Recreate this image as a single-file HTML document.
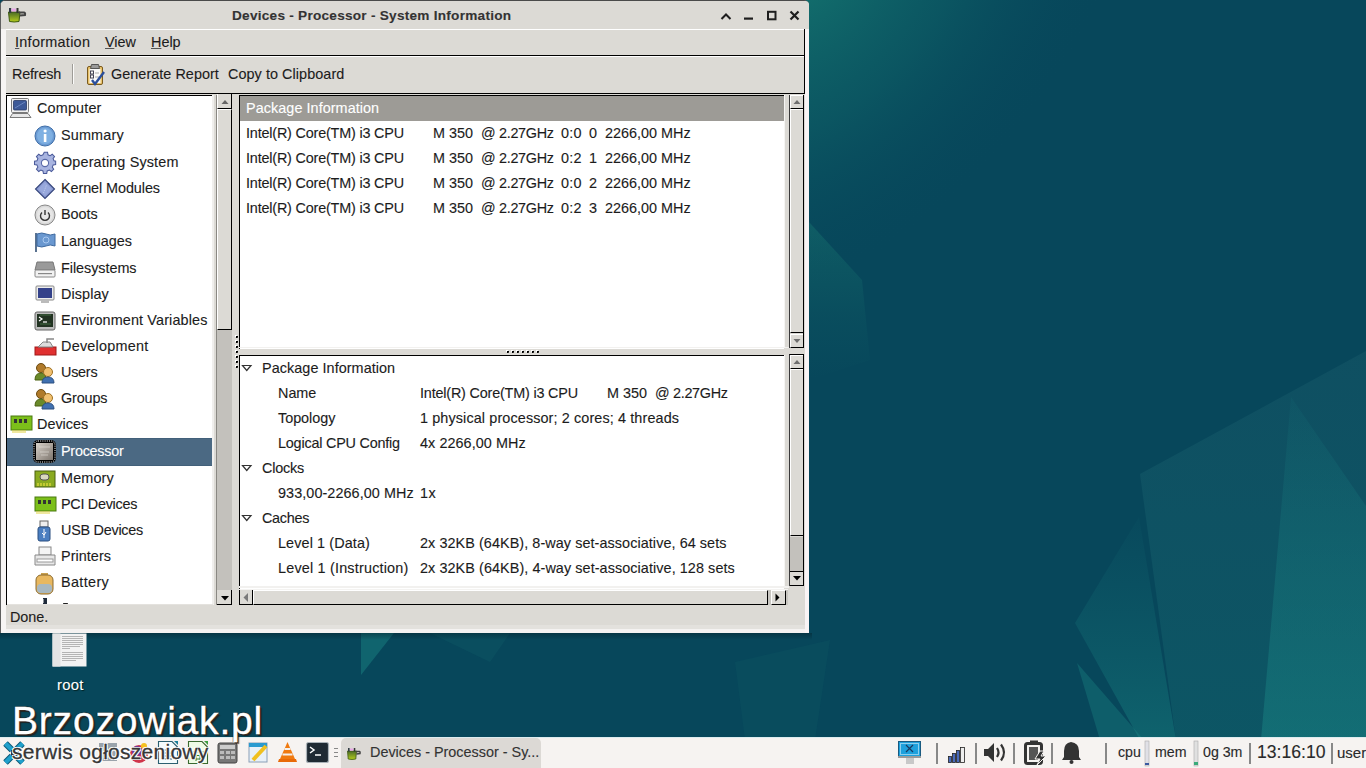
<!DOCTYPE html>
<html><head><meta charset="utf-8">
<style>
*{margin:0;padding:0;box-sizing:border-box}
html,body{width:1366px;height:768px;overflow:hidden}
body{position:relative;background:#07475b;font-family:"Liberation Sans",sans-serif;font-size:14.4px;color:#1c1c1c}
.a{position:absolute}
.t{position:absolute;white-space:nowrap;line-height:17px;height:17px;-webkit-text-stroke:0.12px currentColor}
svg{position:absolute;overflow:visible}
</style></head><body>
<svg style="left:0;top:0" width="1366" height="768" viewBox="0 0 1366 768">
<defs>
<radialGradient id="glow" cx="0.5" cy="0.5" r="0.5">
<stop offset="0" stop-color="#14746f" stop-opacity="0.95"/><stop offset="0.5" stop-color="#0f6468" stop-opacity="0.5"/><stop offset="1" stop-color="#07475b" stop-opacity="0"/></radialGradient>
<filter id="bl" x="-50%" y="-50%" width="200%" height="200%"><feGaussianBlur stdDeviation="35"/></filter>
<linearGradient id="pgw" x1="0" y1="0" x2="0" y2="1"><stop offset="0" stop-color="#1a7a72" stop-opacity="0.4"/><stop offset="0.6" stop-color="#1a7a72" stop-opacity="0.12"/><stop offset="1" stop-color="#1a7a72" stop-opacity="0"/></linearGradient>
<linearGradient id="pg1" x1="0" y1="0" x2="0" y2="1"><stop offset="0" stop-color="#3a8088" stop-opacity="0.15"/><stop offset="1" stop-color="#1f8a86" stop-opacity="0.22"/></linearGradient>
<linearGradient id="pg2" x1="0" y1="0" x2="0" y2="1"><stop offset="0" stop-color="#1b8a88" stop-opacity="0.08"/><stop offset="0.5" stop-color="#1b8a88" stop-opacity="0.28"/><stop offset="1" stop-color="#1b8a88" stop-opacity="0.45"/></linearGradient>
</defs>
<rect width="1366" height="768" fill="#07475b"/>
<ellipse cx="0" cy="0" rx="270" ry="400" fill="url(#glow)" transform="translate(805 -30) rotate(42)"/>
<polygon points="809,222 862,280 870,360 809,380" fill="url(#pgw)"/>
<polygon points="1140,474 1366,351 1366,740 1176,740" fill="url(#pg1)"/>
<polygon points="1291,397 1366,506 1366,740 1261,740" fill="url(#pg2)"/>
<linearGradient id="pg3" x1="0" y1="0" x2="0" y2="1"><stop offset="0" stop-color="#1a7c7f" stop-opacity="0.05"/><stop offset="1" stop-color="#1a8c88" stop-opacity="0.4"/></linearGradient><polygon points="1075,623 1139,517 1176,740 1140,740" fill="url(#pg3)"/>
<polygon points="1077,663 1144,740 1100,740" fill="#1d8a88" opacity="0.35"/>
<polygon points="361,633 394,633 361,675" fill="#1a8282" opacity="0.5"/>
<polygon points="430,633 510,633 490,662" fill="#176d74" opacity="0.2"/>
<polygon points="735,662 830,640 815,740 745,740" fill="#1a7070" opacity="0.12"/>
<linearGradient id="shd" x1="0" y1="0" x2="0" y2="1"><stop offset="0" stop-color="#021f28" stop-opacity="0.45"/><stop offset="1" stop-color="#021f28" stop-opacity="0"/></linearGradient>
<rect x="0" y="633" width="812" height="7" fill="url(#shd)"/>
</svg>
<div class="a" style="left:0px;top:0px;width:809px;height:633px;background:#f4f2f1;border-radius:5px 5px 0 0;border-left:1px solid #5f5f5f;border-top:1px solid #4a4a4a"></div>
<div class="a" style="left:1px;top:1px;width:808px;height:28px;background:#dcdad5;border-radius:4px 4px 0 0"></div>
<div class="t" style="left:232px;top:7px;font-weight:bold;font-size:13.6px;letter-spacing:0.26px;color:#333">Devices - Processor - System Information</div>
<svg style="left:4px;top:4px" width="26" height="22" viewBox="0 0 26 22">
<defs><linearGradient id="bkt" x1="0" y1="0" x2="0" y2="1"><stop offset="0" stop-color="#4a6a28"/><stop offset="1" stop-color="#b4cc1c"/></linearGradient></defs>
<path d="M4.5 8 H16 L15 17.5 Q10 18.5 5.5 17.5 Z" fill="url(#bkt)" stroke="#3e5a10" stroke-width="1"/>
<rect x="5" y="4" width="2.2" height="5" fill="#333c44"/>
<rect x="7.5" y="4.5" width="4.5" height="3" fill="#e8a8e8"/>
<rect x="12.5" y="4" width="2" height="5" fill="#333"/>
<path d="M15 8.5 H20 Q21.5 9 21 11 L16 11.5" fill="none" stroke="#444" stroke-width="2"/>
</svg>
<svg style="left:718px;top:8px" width="90" height="16" viewBox="0 0 90 16">
<path d="M3.5 11 L8 6.5 L12.5 11" fill="none" stroke="#1e1e1e" stroke-width="2"/>
<rect x="26" y="9.5" width="9" height="2.2" fill="#1e1e1e"/>
<rect x="50" y="3.8" width="7.5" height="7.5" fill="none" stroke="#1e1e1e" stroke-width="2"/>
<path d="M72.5 3.5 L80.5 11.5 M80.5 3.5 L72.5 11.5" stroke="#1e1e1e" stroke-width="2.2"/>
</svg>
<div class="a" style="left:6px;top:29px;width:799px;height:600px;background:#dcdad5;"></div>
<div class="a" style="left:1px;top:29px;width:5px;height:604px;background:#f7f5f4;"></div>
<div class="a" style="left:805px;top:29px;width:4px;height:604px;background:#f9f4f5;"></div>
<div class="a" style="left:6px;top:29px;width:799px;height:1px;background:#ffffff;"></div>
<div class="a" style="left:6px;top:55px;width:799px;height:1px;background:#000;"></div>
<div class="a" style="left:804px;top:29px;width:1px;height:27px;background:#000;"></div>
<div class="t" style="left:15px;top:34px;letter-spacing:0.292px;"><u style="text-decoration-thickness:1px;text-underline-offset:1px;text-decoration-color:#555">I</u>nformation</div>
<div class="t" style="left:105px;top:34px;letter-spacing:-0.026px;"><u style="text-decoration-thickness:1px;text-underline-offset:1px;text-decoration-color:#555">V</u>iew</div>
<div class="t" style="left:151px;top:34px;letter-spacing:0.005px;"><u style="text-decoration-thickness:1px;text-underline-offset:1px;text-decoration-color:#555">H</u>elp</div>
<div class="a" style="left:6px;top:56px;width:799px;height:1px;background:#ffffff;"></div>
<div class="a" style="left:6px;top:93px;width:799px;height:1px;background:#000;"></div>
<div class="a" style="left:804px;top:56px;width:1px;height:38px;background:#000;"></div>
<div class="t" style="left:12px;top:66px;letter-spacing:-0.190px;">Refresh</div>
<div class="a" style="left:72px;top:64px;width:1px;height:20px;background:#9e9c97;"></div>
<div class="a" style="left:73px;top:64px;width:1px;height:20px;background:#fbfbfa;"></div>
<svg style="left:86px;top:63px" width="20" height="24" viewBox="0 0 20 24">
<rect x="1.5" y="3.5" width="15" height="18" rx="1.5" fill="#e8c26a" stroke="#7a5a1e" stroke-width="1"/>
<rect x="3.5" y="6" width="11" height="14" fill="#fafafa"/>
<path d="M5.5 1.5 h7 l1 4 h-9 z" fill="#9a9a9a" stroke="#555" stroke-width="1"/>
<rect x="4.5" y="8" width="3" height="3" fill="none" stroke="#445" stroke-width="1"/>
<rect x="4.5" y="12" width="3" height="3" fill="none" stroke="#445" stroke-width="1"/>
<path d="M9 10 h4 M9 14 h4" stroke="#aaa" stroke-width="1"/>
<path d="M6 17 L9 21 L18 9" fill="none" stroke="#2b4f9c" stroke-width="2.4"/>
</svg>
<div class="t" style="left:111px;top:66px;letter-spacing:0.045px;">Generate Report</div>
<div class="t" style="left:228px;top:66px;letter-spacing:0.066px;">Copy to Clipboard</div>
<div class="a" style="left:6px;top:95px;width:208px;height:510px;background:#fff;border-left:1px solid #000;border-top:1px solid #000"></div>
<div class="a" style="left:212px;top:95px;width:2px;height:510px;background:#f0efed;"></div>
<div class="a" style="left:216px;top:95px;width:16px;height:510px;background:#c3c1bc;border-left:1px solid #8a8883"></div>
<div class="a" style="left:217px;top:94px;width:15px;height:15px;background:#dcdad5;border-right:1px solid #000;border-bottom:1px solid #000;border-left:1px solid #fff"></div>
<svg style="left:219px;top:98px" width="11" height="8"><path d="M2.5 6 L6 2 L9.5 6 Z" fill="#666"/></svg>
<div class="a" style="left:217px;top:109px;width:15px;height:221px;background:#dcdad5;border-right:1px solid #000;border-bottom:1px solid #000;border-top:1px solid #fff;border-left:1px solid #fff"></div>
<div class="a" style="left:217px;top:590px;width:15px;height:15px;background:#dcdad5;border-right:1px solid #000;border-bottom:1px solid #000"></div>
<svg style="left:219px;top:594px" width="11" height="8"><path d="M2 2 L10 2 L6 6.5 Z" fill="#000"/></svg>
<div class="a" style="left:7px;top:438px;width:205px;height:28px;background:#4b6983;border-top:1px solid #42607a;border-bottom:1px solid #42607a"></div>
<svg style="left:10px;top:97px" width="22" height="22" viewBox="0 0 22 22"><rect x="1.5" y="1.5" width="17" height="14" rx="1" fill="#f0f0f0" stroke="#7a7a7a"/><rect x="3.5" y="3.5" width="13" height="9.5" rx="1" fill="#3e5a98" stroke="#2a3a66" stroke-width="0.8"/><path d="M5 11 L15 5" stroke="#6a86c0" stroke-width="1"/><path d="M2.5 16.5 H18 L21 20.5 H0 Z" fill="#e8e8e8" stroke="#7a7a7a"/></svg>
<div class="t" style="left:37px;top:100px;letter-spacing:0.175px;">Computer</div>
<svg style="left:34px;top:125px" width="22" height="22" viewBox="0 0 22 22"><circle cx="11" cy="11" r="10" fill="#6b9bd3" stroke="#3f6ea8"/><circle cx="11" cy="11" r="8" fill="#7fb0e2"/><rect x="9.8" y="9" width="2.6" height="8" fill="#fff"/><circle cx="11.1" cy="6" r="1.6" fill="#fff"/></svg>
<div class="t" style="left:61px;top:127px;letter-spacing:0.174px;">Summary</div>
<svg style="left:34px;top:152px" width="22" height="22" viewBox="0 0 22 22"><g transform="translate(11 11)"><path d="M-1.8 -10 H1.8 L2.3 -7.3 L4.6 -6.3 L6.9 -7.9 L9.4 -5.4 L7.8 -3.1 L8.8 -0.8 L10.6 -0.3 V3.3 L7.9 3.8 L6.9 6.1 L8.5 8.4 L6 10.9 L3.7 9.3 L1.4 10.3 L0.9 13 H-2.7 L-3.2 10.3 L-5.5 9.3 L-7.8 10.9 L-10.3 8.4 L-8.7 6.1 L-9.7 3.8 L-12.4 3.3 V-0.3 L-9.7 -0.8 L-8.7 -3.1 L-10.3 -5.4 L-7.8 -7.9 L-5.5 -6.3 L-3.2 -7.3 Z" transform="translate(0.9 -1.5) scale(0.92)" fill="#a8b4e0" stroke="#4a5a9a" stroke-width="1.1"/><circle cx="0" cy="0" r="3.6" fill="#fff" stroke="#5a6aa8" stroke-width="1.1"/></g></svg>
<div class="t" style="left:61px;top:154px;letter-spacing:0.147px;">Operating System</div>
<svg style="left:34px;top:178px" width="22" height="22" viewBox="0 0 22 22"><path d="M11 1.5 L20.5 11 L11 20.5 L1.5 11 Z" fill="#8797cf" stroke="#34447a" stroke-width="1.1"/><path d="M11 4 L18 11 L11 18 L4 11 Z" fill="#98a8dc"/><path d="M9.5 15 L12.5 7" stroke="#c8d4f0" stroke-width="0.8" stroke-dasharray="1 1"/></svg>
<div class="t" style="left:61px;top:180px;letter-spacing:-0.074px;">Kernel Modules</div>
<svg style="left:34px;top:204px" width="22" height="22" viewBox="0 0 22 22"><circle cx="11" cy="11" r="10" fill="#d8d8d8" stroke="#888"/><circle cx="11" cy="11" r="8" fill="#e6e6e6"/><path d="M8 8.5 A4.5 4.5 0 1 0 14 8.5" fill="none" stroke="#333" stroke-width="1.4"/><path d="M11 6 V11" stroke="#333" stroke-width="1.4"/></svg>
<div class="t" style="left:61px;top:206px;letter-spacing:-0.025px;">Boots</div>
<svg style="left:34px;top:231px" width="22" height="22" viewBox="0 0 22 22"><rect x="1" y="2" width="2" height="19" fill="#5a7290"/><path d="M3 3 Q8 1 12 3 T21 3 V15 Q16 13 12 15 T3 15 Z" fill="#6a98d0" stroke="#3f6aa0"/><circle cx="12" cy="9" r="3" fill="none" stroke="#a8c8f0"/></svg>
<div class="t" style="left:61px;top:233px;letter-spacing:-0.038px;">Languages</div>
<svg style="left:34px;top:258px" width="22" height="22" viewBox="0 0 22 22"><path d="M3 4 H19 L21 12 H1 Z" fill="#9a9a9a" stroke="#777"/><rect x="1" y="12" width="20" height="7" rx="1" fill="#f2f2f2" stroke="#888"/><rect x="4" y="15" width="14" height="1.2" fill="#888"/></svg>
<div class="t" style="left:61px;top:260px;letter-spacing:-0.044px;">Filesystems</div>
<svg style="left:34px;top:284px" width="22" height="22" viewBox="0 0 22 22"><rect x="2" y="2" width="18" height="14" rx="1" fill="#ececec" stroke="#888"/><rect x="4" y="4" width="14" height="10" fill="#34418a"/><rect x="7" y="16" width="8" height="3" fill="#bbb"/></svg>
<div class="t" style="left:61px;top:286px;letter-spacing:0.100px;">Display</div>
<svg style="left:34px;top:310px" width="22" height="22" viewBox="0 0 22 22"><rect x="1" y="2" width="20" height="18" rx="2" fill="#bdbdbd" stroke="#666"/><rect x="3" y="4" width="16" height="13" fill="#223322"/><path d="M5 7 L8 9 L5 11" fill="none" stroke="#fff" stroke-width="1.2"/><path d="M9 12 H13" stroke="#fff" stroke-width="1.2"/><path d="M6 5 H17 M6 14 H17" stroke="#4a7a4a" stroke-width="0.8"/></svg>
<div class="t" style="left:61px;top:312px;letter-spacing:0.131px;">Environment Variables</div>
<svg style="left:34px;top:336px" width="22" height="22" viewBox="0 0 22 22"><rect x="1" y="11" width="21" height="8" fill="#e03030" stroke="#a01818"/><path d="M4 11 L9 6 H16 L19 11 Z" fill="#ddd" stroke="#888"/><path d="M13 7 V3 H20" fill="none" stroke="#888" stroke-width="1.5"/></svg>
<div class="t" style="left:61px;top:338px;letter-spacing:0.243px;">Development</div>
<svg style="left:34px;top:362px" width="22" height="22" viewBox="0 0 22 22"><circle cx="7" cy="6" r="4.5" fill="#b07a2a" stroke="#6b4a10"/><path d="M1 18 Q1 11 7 11 Q12 11 12 18 Z" fill="#6a8a2a" stroke="#4a6010"/><circle cx="14" cy="10" r="4.5" fill="#f0c070" stroke="#a07020"/><path d="M8 21 Q8 15 14 15 Q20 15 20 21 Z" fill="#4070b0" stroke="#2a4f80"/></svg>
<div class="t" style="left:61px;top:364px;letter-spacing:-0.240px;">Users</div>
<svg style="left:34px;top:388px" width="22" height="22" viewBox="0 0 22 22"><circle cx="7" cy="6" r="4.5" fill="#b07a2a" stroke="#6b4a10"/><path d="M1 18 Q1 11 7 11 Q12 11 12 18 Z" fill="#6a8a2a" stroke="#4a6010"/><circle cx="14" cy="10" r="4.5" fill="#f0c070" stroke="#a07020"/><path d="M8 21 Q8 15 14 15 Q20 15 20 21 Z" fill="#4070b0" stroke="#2a4f80"/></svg>
<div class="t" style="left:61px;top:390px;letter-spacing:-0.145px;">Groups</div>
<svg style="left:10px;top:413px" width="22" height="22" viewBox="0 0 22 22"><rect x="1" y="3" width="21" height="14" fill="#7cbf1a" stroke="#4a7a10"/><rect x="4" y="6" width="3" height="4" fill="#333"/><rect x="9" y="6" width="3" height="4" fill="#333"/><rect x="14" y="6" width="3" height="4" fill="#333"/><path d="M3 17 V20 M5 17 V20 M7 17 V20 M9 17 V20 M11 17 V20 M13 17 V20 M15 17 V20" stroke="#e0d040" stroke-width="1"/></svg>
<div class="t" style="left:37px;top:416px;letter-spacing:0.002px;">Devices</div>
<svg style="left:34px;top:441px" width="22" height="22" viewBox="0 0 22 22"><defs><linearGradient id="cpug" x1="0" y1="0" x2="1" y2="1"><stop offset="0" stop-color="#d8d2ca"/><stop offset="1" stop-color="#7e766e"/></linearGradient></defs><rect x="-1" y="-1" width="23" height="23" rx="5" fill="#000"/><rect x="0" y="0" width="21" height="21" rx="4" fill="none" stroke="#fff" stroke-width="1" stroke-dasharray="1 1.2"/><rect x="2" y="2" width="17" height="17" fill="url(#cpug)"/><path d="M5 6 H16 M6 11 H15 M7 14 H14" stroke="#e8e4de" stroke-width="0.8" opacity="0.7"/></svg>
<div class="t" style="left:61px;top:443px;letter-spacing:-0.245px;color:#fff">Processor</div>
<svg style="left:34px;top:468px" width="22" height="22" viewBox="0 0 22 22"><rect x="1" y="3" width="20" height="16" fill="#8aaa20" stroke="#4a6010"/><rect x="6" y="6" width="9" height="6" rx="3" fill="#d8d8c0" stroke="#555"/><path d="M4 15 V18 M7 15 V18 M10 15 V18 M13 15 V18 M16 15 V18" stroke="#e8e040" stroke-width="1.2"/></svg>
<div class="t" style="left:61px;top:470px;letter-spacing:0.144px;">Memory</div>
<svg style="left:34px;top:494px" width="22" height="22" viewBox="0 0 22 22"><rect x="1" y="3" width="21" height="14" fill="#7cbf1a" stroke="#4a7a10"/><rect x="4" y="6" width="3" height="4" fill="#333"/><rect x="9" y="6" width="3" height="4" fill="#333"/><rect x="14" y="6" width="3" height="4" fill="#333"/><path d="M3 17 V20 M5 17 V20 M7 17 V20 M9 17 V20 M11 17 V20 M13 17 V20 M15 17 V20" stroke="#e0d040" stroke-width="1"/></svg>
<div class="t" style="left:61px;top:496px;letter-spacing:-0.282px;">PCI Devices</div>
<svg style="left:34px;top:520px" width="22" height="22" viewBox="0 0 22 22"><rect x="6" y="1" width="8" height="6" fill="#eee" stroke="#666"/><rect x="4" y="7" width="12" height="14" rx="2" fill="#4a7ec0" stroke="#2a4f80"/><path d="M10 9 V18 M8 13 L10 15 L12 12" fill="none" stroke="#fff" stroke-width="1"/></svg>
<div class="t" style="left:61px;top:522px;letter-spacing:-0.252px;">USB Devices</div>
<svg style="left:34px;top:546px" width="22" height="22" viewBox="0 0 22 22"><rect x="5" y="1" width="12" height="8" fill="#f4f4f4" stroke="#888"/><path d="M1 9 H21 V19 H1 Z" fill="#e8e8e8" stroke="#888"/><rect x="3" y="13" width="16" height="3" fill="#fff" stroke="#999"/></svg>
<div class="t" style="left:61px;top:548px;letter-spacing:0.051px;">Printers</div>
<svg style="left:34px;top:572px" width="22" height="22" viewBox="0 0 22 22"><rect x="7" y="1" width="7" height="3" fill="#c8a050"/><rect x="2" y="3" width="17" height="19" rx="5" fill="#e8b860" stroke="#8a6a30"/><rect x="3" y="12" width="15" height="9" rx="4" fill="#a8b8c0"/></svg>
<div class="t" style="left:61px;top:574px;letter-spacing:0.357px;">Battery</div>
<svg style="left:40px;top:597px" width="30" height="8"><path d="M3 1 H7 V7 H3 V5.5 H4 V4.5 H3 V3.5 H4 V2.5 H3 Z" fill="#1e2a3a"/><rect x="23" y="6" width="5" height="1.2" rx="0.6" fill="#222"/></svg>
<div class="a" style="left:239px;top:95px;width:550px;height:254px;background:#fff;border-left:1px solid #000;border-top:1px solid #000"></div>
<div class="a" style="left:240px;top:96px;width:544px;height:25px;background:#9d9b96;"></div>
<div class="t" style="left:246px;top:100px;letter-spacing:0.063px;color:#fff">Package Information</div>
<div class="t" style="left:246px;top:125px;letter-spacing:-0.182px;">Intel(R) Core(TM) i3 CPU</div>
<div class="t" style="left:433px;top:125px;letter-spacing:0.028px;">M 350</div>
<div class="t" style="left:481px;top:125px;letter-spacing:-0.299px;">@ 2.27GHz</div>
<div class="t" style="left:561px;top:125px;letter-spacing:0.301px;">0:0</div>
<div class="t" style="left:589px;top:125px;letter-spacing:0.262px;">0</div>
<div class="t" style="left:605px;top:125px;letter-spacing:0.005px;">2266,00 MHz</div>
<div class="t" style="left:246px;top:150px;letter-spacing:-0.182px;">Intel(R) Core(TM) i3 CPU</div>
<div class="t" style="left:433px;top:150px;letter-spacing:0.028px;">M 350</div>
<div class="t" style="left:481px;top:150px;letter-spacing:-0.299px;">@ 2.27GHz</div>
<div class="t" style="left:561px;top:150px;letter-spacing:0.301px;">0:2</div>
<div class="t" style="left:589px;top:150px;letter-spacing:0.262px;">1</div>
<div class="t" style="left:605px;top:150px;letter-spacing:0.005px;">2266,00 MHz</div>
<div class="t" style="left:246px;top:175px;letter-spacing:-0.182px;">Intel(R) Core(TM) i3 CPU</div>
<div class="t" style="left:433px;top:175px;letter-spacing:0.028px;">M 350</div>
<div class="t" style="left:481px;top:175px;letter-spacing:-0.299px;">@ 2.27GHz</div>
<div class="t" style="left:561px;top:175px;letter-spacing:0.301px;">0:0</div>
<div class="t" style="left:589px;top:175px;letter-spacing:0.262px;">2</div>
<div class="t" style="left:605px;top:175px;letter-spacing:0.005px;">2266,00 MHz</div>
<div class="t" style="left:246px;top:200px;letter-spacing:-0.182px;">Intel(R) Core(TM) i3 CPU</div>
<div class="t" style="left:433px;top:200px;letter-spacing:0.028px;">M 350</div>
<div class="t" style="left:481px;top:200px;letter-spacing:-0.299px;">@ 2.27GHz</div>
<div class="t" style="left:561px;top:200px;letter-spacing:0.301px;">0:2</div>
<div class="t" style="left:589px;top:200px;letter-spacing:0.262px;">3</div>
<div class="t" style="left:605px;top:200px;letter-spacing:0.005px;">2266,00 MHz</div>
<div class="a" style="left:784px;top:95px;width:5px;height:254px;background:#dcdad5;"></div>
<div class="a" style="left:239px;top:347px;width:550px;height:1px;background:#f2f1ef;"></div>
<div class="a" style="left:789px;top:95px;width:15px;height:253px;background:#dcdad5;border-left:1px solid #3a3a3a;border-right:1px solid #000"></div>
<div class="a" style="left:790px;top:95px;width:13px;height:14px;background:#dcdad5;border-bottom:1px solid #000;border-top:1px solid #fff;border-left:1px solid #fff"></div>
<svg style="left:791px;top:98px" width="11" height="8"><path d="M2.5 6 L6 2 L9.5 6 Z" fill="#6e6e6e"/></svg>
<div class="a" style="left:790px;top:109px;width:13px;height:224px;background:#dcdad5;border-bottom:1px solid #000;border-top:1px solid #fff;border-left:1px solid #fff"></div>
<div class="a" style="left:790px;top:334px;width:13px;height:14px;background:#dcdad5;border-bottom:1px solid #000;border-top:1px solid #fff;border-left:1px solid #fff"></div>
<svg style="left:791px;top:337px" width="11" height="8"><path d="M2.5 2 L9.5 2 L6 6 Z" fill="#6e6e6e"/></svg>
<div class="a" style="left:784px;top:95px;width:1px;height:253px;background:#f6f5f3;"></div>
<div class="a" style="left:236px;top:336px;width:2px;height:2px;background:#000;border-radius:0 0 1px 0;box-shadow:-1px -1px 0 #fff"></div>
<div class="a" style="left:236px;top:341px;width:2px;height:2px;background:#000;border-radius:0 0 1px 0;box-shadow:-1px -1px 0 #fff"></div>
<div class="a" style="left:236px;top:346px;width:2px;height:2px;background:#000;border-radius:0 0 1px 0;box-shadow:-1px -1px 0 #fff"></div>
<div class="a" style="left:236px;top:351px;width:2px;height:2px;background:#000;border-radius:0 0 1px 0;box-shadow:-1px -1px 0 #fff"></div>
<div class="a" style="left:236px;top:356px;width:2px;height:2px;background:#000;border-radius:0 0 1px 0;box-shadow:-1px -1px 0 #fff"></div>
<div class="a" style="left:236px;top:361px;width:2px;height:2px;background:#000;border-radius:0 0 1px 0;box-shadow:-1px -1px 0 #fff"></div>
<div class="a" style="left:236px;top:366px;width:2px;height:2px;background:#000;border-radius:0 0 1px 0;box-shadow:-1px -1px 0 #fff"></div>
<div class="a" style="left:507px;top:351px;width:2px;height:2px;background:#000;border-radius:0 0 1px 0;box-shadow:-1px -1px 0 #fff"></div>
<div class="a" style="left:512px;top:351px;width:2px;height:2px;background:#000;border-radius:0 0 1px 0;box-shadow:-1px -1px 0 #fff"></div>
<div class="a" style="left:517px;top:351px;width:2px;height:2px;background:#000;border-radius:0 0 1px 0;box-shadow:-1px -1px 0 #fff"></div>
<div class="a" style="left:522px;top:351px;width:2px;height:2px;background:#000;border-radius:0 0 1px 0;box-shadow:-1px -1px 0 #fff"></div>
<div class="a" style="left:527px;top:351px;width:2px;height:2px;background:#000;border-radius:0 0 1px 0;box-shadow:-1px -1px 0 #fff"></div>
<div class="a" style="left:532px;top:351px;width:2px;height:2px;background:#000;border-radius:0 0 1px 0;box-shadow:-1px -1px 0 #fff"></div>
<div class="a" style="left:537px;top:351px;width:2px;height:2px;background:#000;border-radius:0 0 1px 0;box-shadow:-1px -1px 0 #fff"></div>
<div class="a" style="left:239px;top:355px;width:550px;height:235px;background:#fff;border-left:1px solid #000;border-top:1px solid #000"></div>
<div class="a" style="left:784px;top:355px;width:5px;height:235px;background:#dcdad5;"></div>
<div class="a" style="left:239px;top:586px;width:550px;height:2px;background:#f2f1ef;"></div>
<svg style="left:241px;top:364px" width="12" height="8"><path d="M1.5 1.5 L10 1.5 L5.75 6.5 Z" fill="none" stroke="#333" stroke-width="1.2"/></svg>
<div class="t" style="left:262px;top:360px;letter-spacing:0.063px;">Package Information</div>
<div class="t" style="left:278px;top:385px;letter-spacing:-0.015px;">Name</div>
<div class="t" style="left:420px;top:385px;letter-spacing:-0.182px;">Intel(R) Core(TM) i3 CPU</div>
<div class="t" style="left:607px;top:385px;letter-spacing:0.028px;">M 350</div>
<div class="t" style="left:655px;top:385px;letter-spacing:-0.299px;">@ 2.27GHz</div>
<div class="t" style="left:278px;top:410px;letter-spacing:-0.030px;">Topology</div>
<div class="t" style="left:420px;top:410px;letter-spacing:0.118px;">1 physical processor; 2 cores; 4 threads</div>
<div class="t" style="left:278px;top:435px;letter-spacing:-0.205px;">Logical CPU Config</div>
<div class="t" style="left:420px;top:435px;letter-spacing:0.068px;">4x 2266,00 MHz</div>
<svg style="left:241px;top:464px" width="12" height="8"><path d="M1.5 1.5 L10 1.5 L5.75 6.5 Z" fill="none" stroke="#333" stroke-width="1.2"/></svg>
<div class="t" style="left:262px;top:460px;letter-spacing:-0.186px;">Clocks</div>
<div class="t" style="left:278px;top:485px;letter-spacing:0.078px;">933,00-2266,00 MHz</div>
<div class="t" style="left:420px;top:485px;letter-spacing:0.378px;">1x</div>
<svg style="left:241px;top:514px" width="12" height="8"><path d="M1.5 1.5 L10 1.5 L5.75 6.5 Z" fill="none" stroke="#333" stroke-width="1.2"/></svg>
<div class="t" style="left:262px;top:510px;letter-spacing:-0.271px;">Caches</div>
<div class="t" style="left:278px;top:535px;letter-spacing:0.114px;">Level 1 (Data)</div>
<div class="t" style="left:420px;top:535px;letter-spacing:0.074px;">2x 32KB (64KB), 8-way set-associative, 64 sets</div>
<div class="t" style="left:278px;top:560px;letter-spacing:0.196px;">Level 1 (Instruction)</div>
<div class="t" style="left:420px;top:560px;letter-spacing:0.078px;">2x 32KB (64KB), 4-way set-associative, 128 sets</div>
<div class="a" style="left:789px;top:354px;width:15px;height:232px;background:#dcdad5;border-left:1px solid #3a3a3a;border-right:1px solid #000;border-top:1px solid #000"></div>
<div class="a" style="left:790px;top:355px;width:13px;height:14px;background:#dcdad5;border-bottom:1px solid #000;border-top:1px solid #fff;border-left:1px solid #fff"></div>
<svg style="left:791px;top:358px" width="11" height="8"><path d="M2.5 6 L6 2 L9.5 6 Z" fill="#6e6e6e"/></svg>
<div class="a" style="left:790px;top:369px;width:13px;height:167px;background:#dcdad5;border-bottom:1px solid #000;border-top:1px solid #fff;border-left:1px solid #fff"></div>
<div class="a" style="left:790px;top:537px;width:13px;height:34px;background:#c3c1bc;"></div>
<div class="a" style="left:790px;top:571px;width:13px;height:15px;background:#dcdad5;border-bottom:1px solid #000;border-top:1px solid #000"></div>
<svg style="left:791px;top:574px" width="11" height="8"><path d="M2 2 L10 2 L6 6.5 Z" fill="#000"/></svg>
<div class="a" style="left:784px;top:355px;width:1px;height:231px;background:#f6f5f3;"></div>
<div class="a" style="left:239px;top:589px;width:549px;height:16px;background:#c8c6c1;border-top:1px solid #f4f3f1"></div>
<div class="a" style="left:239px;top:590px;width:14px;height:15px;background:#dcdad5;border-right:1px solid #000;border-bottom:1px solid #000;border-left:1px solid #000"></div>
<svg style="left:241px;top:592px" width="10" height="11"><path d="M7 1 L7 10 L2.5 5.5 Z" fill="#7a7a7a"/></svg>
<div class="a" style="left:253px;top:590px;width:515px;height:15px;background:#dcdad5;border-right:1px solid #000;border-bottom:1px solid #000;border-top:1px solid #fff;border-left:1px solid #fff"></div>
<div class="a" style="left:771px;top:590px;width:15px;height:15px;background:#dcdad5;border-right:1px solid #000;border-bottom:1px solid #000;border-left:1px solid #fff;border-top:1px solid #fff"></div>
<svg style="left:772px;top:592px" width="10" height="11"><path d="M3.5 1.5 L3.5 9.5 L7.5 5.5 Z" fill="#000"/></svg>
<div class="a" style="left:6px;top:605px;width:799px;height:24px;background:#dcdad5;"></div>
<div class="a" style="left:6px;top:625px;width:799px;height:4px;background:#e3e1dd;"></div>
<div class="a" style="left:7px;top:604px;width:206px;height:1px;background:#e4e2de;"></div>
<div class="t" style="left:10px;top:609px;letter-spacing:-0.018px;">Done.</div>
<svg style="left:52px;top:633px" width="36" height="36" viewBox="0 0 36 36">
<rect x="0.5" y="0.5" width="34" height="33" fill="#f2f2f2"/>
<rect x="0.5" y="0.5" width="8" height="33" fill="#e4e4e4"/>
<g stroke="#8a8a8a" stroke-width="0.6">
<path d="M10 3.5 H31 M10 5.5 H31 M10 7.5 H31 M10 9.5 H31 M10 11.5 H31 M10 13.5 H28 M10 15.5 H18 M10 19.5 H31 M10 21.5 H31 M10 23.5 H31 M10 25.5 H31 M10 27.5 H24"/></g>
</svg>
<div class="t" style="left:57px;top:677px;letter-spacing:0.313px;color:#fff;text-shadow:1px 1px 1px #022;font-size:14.8px">root</div>
<div class="a" style="left:0px;top:737px;width:1366px;height:31px;background:#f6f3f1;"></div>
<div class="a" style="left:0px;top:737px;width:1366px;height:1px;background:#dcecef;"></div>
<svg style="left:0;top:737px" width="1366" height="31" viewBox="0 0 1366 31">
<!-- app menu X -->
<path d="M5.5 6.5 L12 13 M22.5 6.5 L16 13 M5.5 25.5 L12 19 M22.5 25.5 L16 19" stroke="#0d5a78" stroke-width="6.4"/><path d="M5.5 6.5 L12 13 M22.5 6.5 L16 13 M5.5 25.5 L12 19 M22.5 25.5 L16 19" stroke="#1fa0cc" stroke-width="4.4"/><rect x="11" y="13" width="6" height="6" fill="#111" opacity="0.85"/>
<!-- file manager -->
<rect x="99" y="6" width="18" height="18" fill="#9aa3ab"/>
<!-- browser -->
<circle cx="139" cy="17" r="9" fill="#d0354a"/><circle cx="137" cy="14" r="5" fill="#6a3aa0"/><circle cx="144" cy="9" r="3" fill="#f5c020"/>
<!-- writer -->
<path d="M158.5 4.5 H172 L177.5 10 V26.5 H158.5 Z" fill="#f4fbfd" stroke="#2b5f70" stroke-width="1.1"/>
<path d="M174 4 L178 4 L178 8 Z" fill="#1a7f9a"/>
<path d="M162 13 H168 M162 16 H172 M162 19 H172 M162 22 H172" stroke="#2b5f70" stroke-width="1.1"/>
<!-- calc -->
<path d="M188.5 4.5 H202 L207.5 10 V26.5 H188.5 Z" fill="#eefbe6" stroke="#3a6a30" stroke-width="1.1"/>
<path d="M204 4 L208 4 L208 8 Z" fill="#3aa040"/>
<path d="M192 15 H204 M192 18.5 H204 M192 22 H204 M196 13 V24 M200 13 V24" stroke="#3a7a30" stroke-width="1"/>
<!-- calculator -->
<rect x="218" y="6" width="19" height="20" rx="2" fill="#777" stroke="#444"/><rect x="220" y="8" width="15" height="4" fill="#ccc"/>
<g fill="#bbb"><rect x="220" y="14" width="4" height="3"/><rect x="226" y="14" width="4" height="3"/><rect x="231" y="14" width="4" height="3"/><rect x="220" y="19" width="4" height="3"/><rect x="226" y="19" width="4" height="3"/><rect x="231" y="19" width="4" height="3"/></g>
<!-- text editor -->
<rect x="249" y="6" width="18" height="19" fill="#e8f0f8" stroke="#8aa0b8"/><rect x="249" y="6" width="18" height="4" fill="#2a9ad0"/>
<path d="M253 23 L266 9" stroke="#f0c020" stroke-width="4"/>
<!-- vlc -->
<path d="M287.5 5 L295 22 H280 Z" fill="#f07a10"/><path d="M279 22 H296 L297 25 H278 Z" fill="#e86a08"/><path d="M284.5 12 H290.5 M282.5 17.5 H292.5" stroke="#f4f0ec" stroke-width="2.2"/>
<!-- terminal -->
<rect x="306.5" y="5.5" width="22" height="20" rx="2" fill="#1f2a33" stroke="#aab2b8" stroke-width="1.2"/>
<path d="M310 10 L314 13 L310 16" fill="none" stroke="#fff" stroke-width="1.5"/><path d="M315 18 H321" stroke="#fff" stroke-width="1.5"/>
<path d="M334 11.5 H338 M334 15.5 H338 M334 19.5 H338" stroke="#888" stroke-width="1"/>
</svg>
<div class="t" style="left:12px;top:740px;font-size:21px;line-height:24px;height:24px;letter-spacing:0.27px;color:#363636;-webkit-text-stroke:0.3px #363636;text-shadow:-1px -1px 0 #fff,1px -1px 0 #fff,-1px 1px 0 #fff,1px 1px 0 #fff">serwis ogłoszeniowy</div>
<div class="a" style="left:341px;top:738px;width:200px;height:30px;background:#dcd9d5;border-radius:5px 5px 0 0"></div>
<svg style="left:345px;top:746px" width="18" height="16" viewBox="0 0 18 16">
<path d="M2.5 5 H11.5 L10.8 13 Q7 14 3.2 13 Z" fill="url(#bkt)" stroke="#3e5a10" stroke-width="0.8"/>
<rect x="3" y="2" width="1.6" height="3.5" fill="#333c44"/><rect x="5" y="2.5" width="3.4" height="2.2" fill="#e8a8e8"/><rect x="8.8" y="2" width="1.5" height="3.5" fill="#333"/>
<path d="M11 5.5 H14.5 Q15.5 6 15 7.5 L11.5 8" fill="none" stroke="#444" stroke-width="1.5"/></svg>
<div class="t" style="left:370px;top:744px;font-size:14.4px;color:#333">Devices - Processor - Sy...</div>
<svg style="left:0;top:737px" width="1366" height="31" viewBox="0 0 1366 31">
<rect x="898.5" y="4.5" width="22" height="15" fill="#1ea0dc" stroke="#1a5a80" stroke-width="1"/>
<rect x="900.5" y="6.5" width="18" height="11" fill="none" stroke="#fff" stroke-width="1" stroke-dasharray="1 1"/>
<path d="M906 8 L913 15 M913 8 L906 15" stroke="#1a3a60" stroke-width="1.2"/>
<rect x="898" y="19" width="23" height="2" fill="#9a9a9a"/>
<rect x="906" y="21" width="8" height="6" fill="#c8c8c8"/>
<g fill="#888"><rect x="936" y="6" width="2" height="21"/><rect x="975" y="6" width="2" height="21"/><rect x="1013" y="6" width="2" height="21"/><rect x="1051" y="6" width="2" height="21"/><rect x="1105" y="6" width="2" height="21"/><rect x="1249" y="6" width="2" height="21"/><rect x="1331" y="6" width="2" height="21"/></g>
<g fill="#4a6aba" stroke="#222" stroke-width="0.8"><rect x="948.5" y="19.5" width="3" height="6"/><rect x="952.5" y="16.5" width="3" height="9"/><rect x="956.5" y="13.5" width="3" height="12"/><rect x="960.5" y="10.5" width="4" height="15" fill="#eee"/></g>
<path d="M984 12 H988 L994 6 V25 L988 19 H984 Z" fill="#333"/>
<path d="M997 11 Q1000 15.5 997 20" fill="none" stroke="#333" stroke-width="2.2"/><path d="M1001 7.5 Q1007 15.5 1001 23.5" fill="none" stroke="#333" stroke-width="2.2"/>
<rect x="1030" y="3.5" width="8" height="3" fill="#333"/><rect x="1025.5" y="6.5" width="16" height="20" rx="2" fill="none" stroke="#333" stroke-width="3"/>
<rect x="1029" y="10" width="9" height="13" fill="#555"/><path d="M1040 14 L1035 22 H1040 L1037 28 L1046 19 H1041 L1044 14 Z" fill="#333" stroke="#f6f3f1" stroke-width="1"/>
<path d="M1071 5 Q1079 6 1079 14 V20 L1081 23 H1062 L1064 20 V14 Q1064 6 1071 5 Z" fill="#333"/><circle cx="1071.5" cy="25" r="2" fill="#333"/>
<rect x="1145" y="4" width="4" height="25" fill="#e0e0e6" stroke="#aaa" stroke-width="0.6"/><rect x="1145" y="26" width="4" height="2" fill="#3a5aa0"/>
<rect x="1194" y="4" width="4" height="25" fill="#e0e0e0" stroke="#aaa" stroke-width="0.6"/><rect x="1194" y="25" width="4" height="3" fill="#3aaa7a"/>
</svg>
<div class="t" style="left:1118px;top:744px;font-size:14.2px;color:#2a2a2a;">cpu</div>
<div class="t" style="left:1155px;top:744px;font-size:14.2px;color:#2a2a2a;">mem</div>
<div class="t" style="left:1203px;top:744px;font-size:14.2px;color:#2a2a2a;">0g 3m</div>
<div class="t" style="left:1257px;top:742px;font-size:17.6px;line-height:20px;height:20px;color:#2a2a2a">13:16:10</div>
<div class="t" style="left:1337px;top:744px;font-size:15px;color:#2a2a2a;">user</div>
<div class="t" style="left:12px;top:699px;font-size:39px;line-height:44px;height:44px;color:#fff;-webkit-text-stroke:0.35px #fff;text-shadow:1px 1px 0 #3a2a20,-1px 0 0 rgba(40,20,10,.5),0 -1px 0 rgba(40,20,10,.4),2px 2px 1px rgba(40,20,10,.7);letter-spacing:0.8px">Brzozowiak.pl</div>
</body></html>
